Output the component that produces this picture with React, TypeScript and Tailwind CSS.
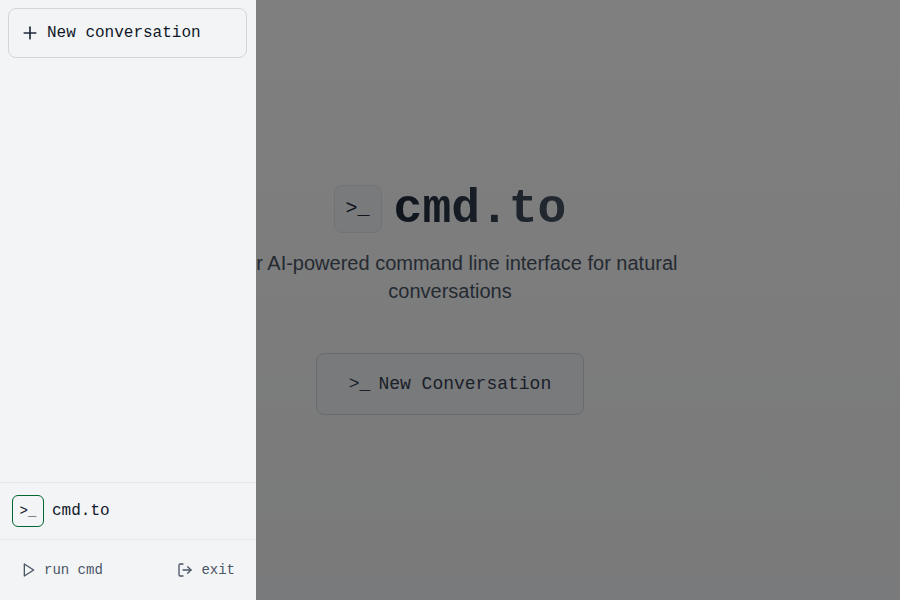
import { LogOut, Plus } from 'lucide-react';

const mono = "font-['Liberation_Mono',monospace]";

export default function App() {
  return (
    <div className="relative h-screen w-full overflow-hidden bg-gradient-to-b from-white to-[#f3f4f6] font-['Liberation_Sans',sans-serif]">
      {/* Landing */}
      <main className="flex h-full flex-col items-center justify-center">
        <div className="flex max-w-lg flex-col items-center text-center">
          <div className="mb-4 flex items-center gap-3">
            <div className={`flex h-12 w-12 items-center justify-center rounded-lg border border-gray-200 bg-gray-100 text-xl text-gray-800 ${mono}`}>
              &gt;_
            </div>
            <h1 className={`bg-gradient-to-r from-gray-800 to-gray-600 bg-clip-text text-5xl font-bold text-transparent ${mono}`}>cmd.to</h1>
          </div>
          <p className="mb-12 text-xl leading-7 text-gray-600">
            Your AI-powered command line interface for natural conversations
          </p>
          <button className={`flex items-center gap-2 rounded-lg border border-gray-300 bg-gray-100 px-8 py-4 text-lg text-gray-700 ${mono}`}>
            <span>&gt;_</span>
            <span>New Conversation</span>
          </button>
        </div>
      </main>

      {/* Overlay */}
      <div className="absolute inset-0 bg-black/50" />

      {/* Sidebar */}
      <aside className="absolute inset-y-0 left-0 flex w-64 flex-col bg-[#f3f4f6]">
        <div className="flex-1 p-2 pr-[9px]">
          <button className={`flex h-[50px] w-full items-center gap-[7px] rounded-lg border border-gray-300 pl-[11px] text-base text-gray-900 ${mono}`}>
            <Plus className="h-5 w-5 text-gray-800" />
            <span>New conversation</span>
          </button>
        </div>
        <div className="flex h-[57px] items-center gap-2 border-t border-gray-200 px-3">
          <div className={`flex h-8 w-8 items-center justify-center rounded-md border border-green-800 text-sm text-gray-900 ${mono}`}>
            &gt;_
          </div>
          <span className={`text-base text-gray-900 ${mono}`}>cmd.to</span>
        </div>
        <div className={`flex h-[61px] items-center justify-between border-t border-gray-200 pl-[21px] pr-[21px] text-sm text-gray-600 ${mono}`}>
          <span className="flex items-center gap-[7px]">
            <svg viewBox="0 0 24 24" fill="none" stroke="currentColor" strokeWidth="2" strokeLinecap="round" strokeLinejoin="round" className="h-4 w-4">
              <polygon points="5 3 19 12 5 21 5 3" />
            </svg>
            run cmd
          </span>
          <span className="flex items-center gap-2">
            <LogOut className="h-4 w-4" />
            exit
          </span>
        </div>
      </aside>
    </div>
  );
}
